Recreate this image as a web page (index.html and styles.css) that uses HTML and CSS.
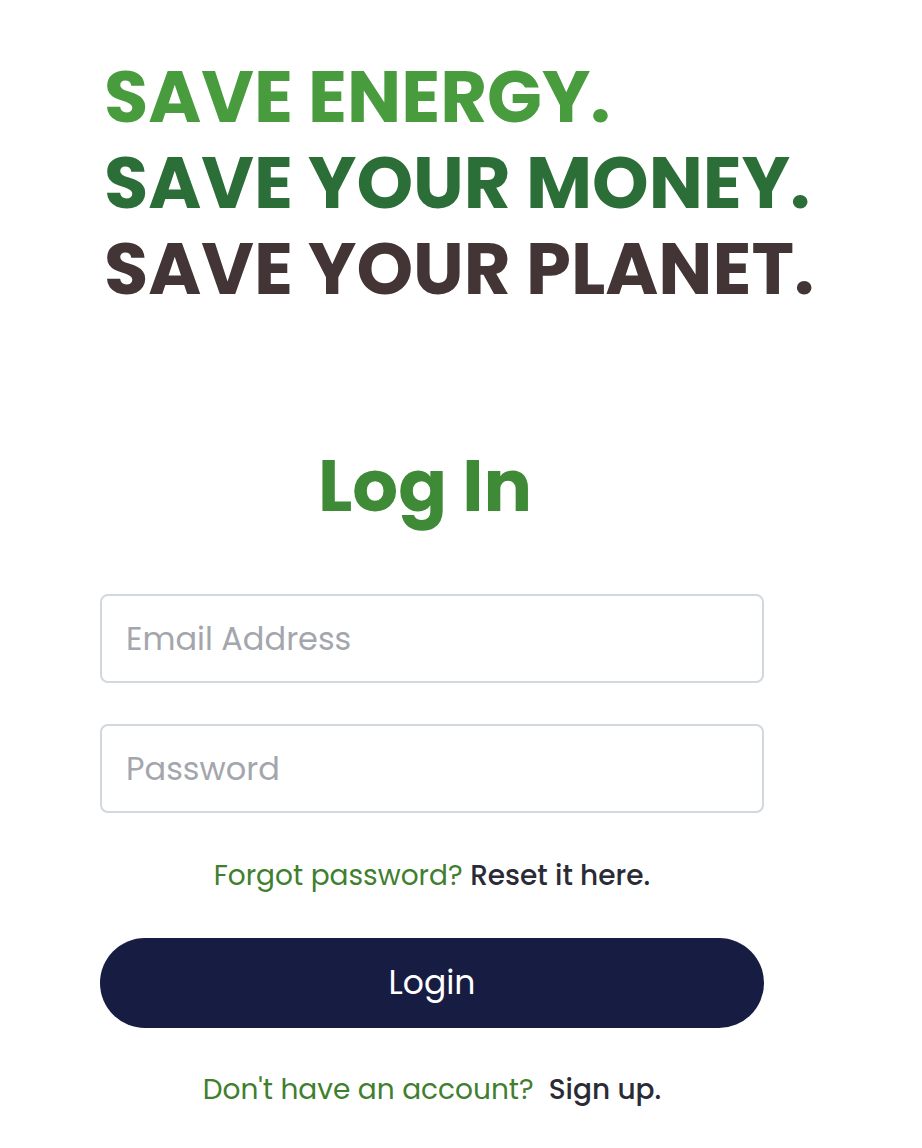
FILE: index.html
```html
<!DOCTYPE html>
<html lang="en">

<head>
	<meta charset="UTF-8">
	<title>Log In</title>
	<link rel="stylesheet" href="styles.css">
</head>

<body>
	<main class="page">
		<h1 class="slogan">
			<span class="slogan-line energy">SAVE ENERGY.</span>
			<span class="slogan-line money">SAVE YOUR MONEY.</span>
			<span class="slogan-line planet">SAVE YOUR PLANET.</span>
		</h1>

		<section class="login">
			<h2 class="login-title">Log In</h2>
			<form class="login-form" onsubmit="return false">
				<input class="field" type="email" placeholder="Email Address">
				<input class="field" type="password" placeholder="Password">
				<p class="hint forgot">Forgot password? <a href="#">Reset it here.</a></p>
				<button class="btn-login" type="submit">Login</button>
				<p class="hint signup">Don't have an account?&nbsp; <a href="#">Sign up.</a></p>
			</form>
		</section>
	</main>
</body>

</html>
```

FILE: styles.css
```css
body {
	margin: 0;
	background: #fff;
	font-family: "Poppins", "Inter", "Noto Sans", sans-serif;
}

.page {
	padding: 54px 0 0 100px;
	width: 664px;
}

.slogan {
	margin: 0 0 0 4px;
	font-size: 72px;
	line-height: 86px;
	font-weight: 700;
	white-space: nowrap;
}

.slogan-line {
	display: block;
}

.energy {
	color: #489c3e;
}

.money {
	color: #2b6e37;
}

.planet {
	color: #433536;
}

.login {
	margin-top: 134px;
}

.login-title {
	margin: 0 0 68px;
	text-align: center;
	padding-right: 14px;
	font-size: 72px;
	line-height: 80px;
	font-weight: 700;
	color: #3f8a37;
}

.login-form {
	display: flex;
	flex-direction: column;
}

.field {
	height: 89px;
	box-sizing: border-box;
	margin-bottom: 41px;
	padding: 0 24px;
	border: 2px solid #d3d7de;
	border-radius: 8px;
	font: 32px "Poppins", "Inter", "Noto Sans", sans-serif;
	color: #333;
	outline: none;
}

.field::placeholder {
	color: #a3a6ad;
}

.field:nth-of-type(2) {
	margin-bottom: 43px;
}

.hint {
	margin: 0;
	text-align: center;
	font-size: 28px;
	line-height: 40px;
	color: #3f7f2f;
}

.hint a {
	color: #2a2b36;
	font-weight: 500;
	text-decoration: none;
}

.btn-login {
	margin: 42px 0;
	height: 90px;
	border: none;
	border-radius: 45px;
	background: #161c42;
	color: #fff;
	font: 33px "Poppins", "Inter", "Noto Sans", sans-serif;
	cursor: pointer;
}
```
